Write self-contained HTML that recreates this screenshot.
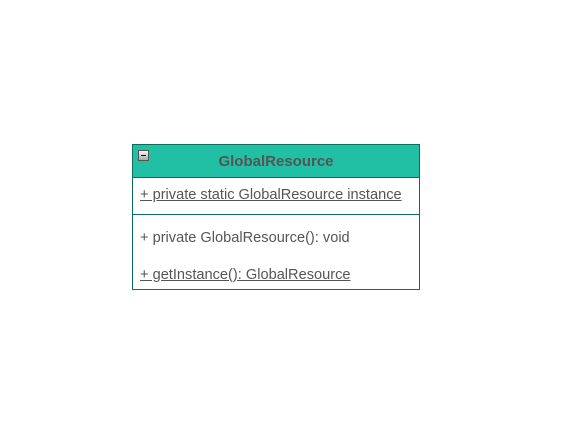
<!DOCTYPE html>
<html><head><style>
body{margin:0;width:573px;height:430px;background:#fff;font-family:"Liberation Sans",sans-serif;position:relative;overflow:hidden}
.box{position:absolute;left:132px;top:144px;width:286px;height:144px;border:1px solid #0b6e5c;background:#fff}
.hd{position:absolute;left:0;top:0;width:286px;height:32px;background:#21bfa3;border-bottom:1px solid #0b6e5c}
.hd span{position:absolute;left:0;width:286px;top:8px;text-align:center;font-weight:bold;font-size:15px;color:#555}
.mn{position:absolute;left:5px;top:5px;width:11px;height:11px;background:linear-gradient(#f4f4f4,#aaa);border:1px solid #555;box-sizing:border-box}
.mn:after{content:"";position:absolute;left:2px;right:2px;top:4px;height:1px;background:#000}
.t{position:absolute;left:7px;font-size:14.6px;color:#555;white-space:nowrap}
.u{text-decoration:underline}
.line{position:absolute;left:0;width:286px;top:69px;height:1px;background:#0b6e5c}
</style></head><body>
<div class="box">
<div class="hd"><div class="mn"></div><span>GlobalResource</span></div>
<div class="t u" style="top:42px">+ private static GlobalResource instance</div>
<div class="line"></div>
<div class="t" style="top:85px">+ private GlobalResource(): void</div>
<div class="t u" style="top:122px">+ getInstance(): GlobalResource</div>
</div>
</body></html>
